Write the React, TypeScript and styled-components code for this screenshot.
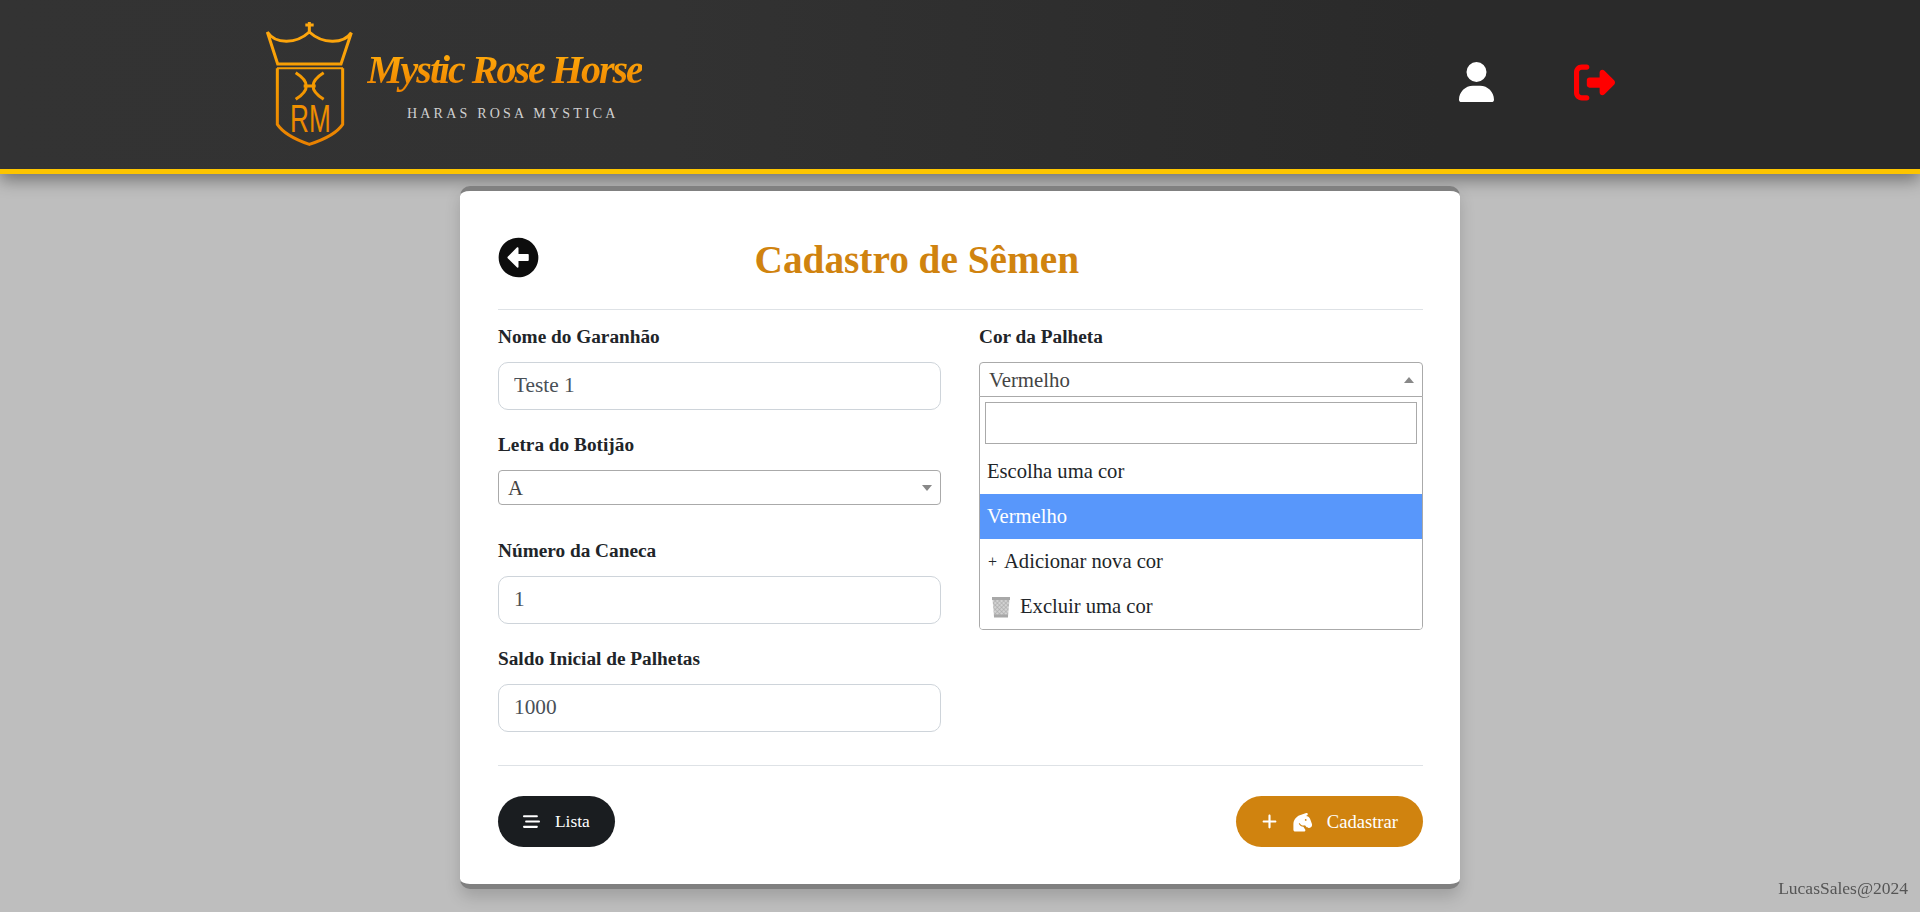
import React from 'react';
import styled, {createGlobalStyle} from 'styled-components';
import {FaUser, FaRightFromBracket, FaBarsStaggered, FaPlus, FaHorseHead} from 'react-icons/fa6';
import {FaArrowAltCircleLeft} from 'react-icons/fa';

const serif = `"Liberation Serif", "Times New Roman", serif`;

const GlobalStyle = createGlobalStyle`
  html, body {
    margin: 0;
    padding: 0;
    background: #bebebe;
  }
  body {
    font-family: ${serif};
    color: #212529;
  }
  * {
    box-sizing: border-box;
  }
`;

const Page = styled.div`
  min-height: 912px;
  background: #bebebe;
`;

const Header = styled.header`
  height: 174px;
  display: flex;
  align-items: center;
  justify-content: space-between;
  padding: 0 305px 5px 265px;
  background: linear-gradient(90deg, #333 0%, #323232 35%, #2a2a2a 75%, #2a2a2a 100%);
  border-bottom: 5px solid #fdc500;
  box-shadow: 0 6px 16px rgba(0, 0, 0, 0.4);
`;

const Brand = styled.div`
  display: flex;
  align-items: center;
  gap: 12px;
`;

const CrestMark = styled.svg`
  margin-top: 3px;
  flex: none;
`;

const BrandText = styled.div`
  display: flex;
  flex-direction: column;
  align-items: flex-start;
  margin-top: 2px;
`;

const BrandName = styled.span`
  font-size: 40px;
  line-height: 50px;
  font-style: italic;
  font-weight: 700;
  letter-spacing: -2px;
  white-space: nowrap;
  background: linear-gradient(180deg, #ffa90a 20%, #ef8500 85%);
  -webkit-background-clip: text;
  background-clip: text;
  color: transparent;
`;

const BrandTag = styled.span`
  font-size: 14px;
  line-height: 16px;
  margin: 11px 0 0 40px;
  letter-spacing: 3.2px;
  color: #d0d0d0;
  white-space: nowrap;
`;

const HeaderIcons = styled.div`
  display: flex;
  align-items: center;
  gap: 80px;
`;

const UserIcon = styled(FaUser)`
  width: 35px;
  height: 40px;
  color: #fff;
`;

const LogoutIcon = styled(FaRightFromBracket)`
  width: 41px;
  height: 41px;
  color: #ff0000;
`;

const Card = styled.main`
  width: 1000px;
  margin: 12px auto 0;
  padding: 46px 37px 37px 38px;
  background: #fff;
  border-top: 5px solid #808080;
  border-bottom: 5px solid #808080;
  border-radius: 10px;
  box-shadow: 0 8px 16px rgba(0, 0, 0, 0.16);
`;

const TitleRow = styled.div`
  display: flex;
  height: 72px;
`;

const BackIcon = styled(FaArrowAltCircleLeft)`
  width: 41px;
  height: 41px;
  margin: -0.5px -1px 0 -0.5px;
  color: #0d0d0d;
  flex: none;
`;

const Title = styled.h1`
  margin: 0 0 0 217px;
  font-size: 39.3px;
  line-height: 46px;
  font-weight: 700;
  color: #d0830f;
`;

const Divider = styled.hr`
  margin: 0;
  border: 0;
  border-top: 1px solid #dee2e6;
`;

const FormGrid = styled.div`
  display: grid;
  grid-template-columns: 443px 444px;
  column-gap: 38px;
  padding: 15px 0 33px;
`;

const Column = styled.div`
  display: flex;
  flex-direction: column;
  gap: 23px;
`;

const Field = styled.div`
  display: flex;
  flex-direction: column;
`;

const Label = styled.label`
  height: 24px;
  margin-bottom: 13px;
  font-size: 19.3px;
  line-height: 24px;
  font-weight: 700;
  color: #212529;
`;

const TextInput = styled.input`
  width: 100%;
  height: 48px;
  padding: 0 15px 2px;
  border: 1px solid #ced4da;
  border-radius: 10px;
  background: #fff;
  font-family: ${serif};
  font-size: 21.3px;
  color: #495057;
  outline: none;
`;

const SelectBox = styled.div<{$open?: boolean}>`
  position: relative;
  height: 35px;
  margin-bottom: ${({$open}) => ($open ? '0' : '11px')};
`;

const SelectHead = styled.div<{$open?: boolean}>`
  height: 100%;
  display: flex;
  align-items: center;
  justify-content: space-between;
  padding: 0 8px 0 9px;
  border: 1px solid #aaa;
  border-radius: ${({$open}) => ($open ? '4px 4px 0 0' : '4px')};
  background: #fff;
  font-size: 20.8px;
  color: #444;
`;

const Caret = styled.span<{$open?: boolean}>`
  width: 0;
  height: 0;
  border-left: 5px solid transparent;
  border-right: 5px solid transparent;
  border-top: ${({$open}) => ($open ? '0' : '6px solid #888')};
  border-bottom: ${({$open}) => ($open ? '6px solid #888' : '0')};
`;

const Dropdown = styled.div`
  position: absolute;
  top: 34px;
  left: 0;
  right: 0;
  background: #fff;
  border: 1px solid #aaa;
  border-radius: 0 0 4px 4px;
  overflow: hidden;
`;

const SearchWrap = styled.div`
  padding: 5px;
`;

const SearchInput = styled.input`
  display: block;
  width: 100%;
  height: 42px;
  border: 1px solid #aaa;
  background: #fff;
  outline: none;
`;

const Option = styled.div<{$active?: boolean}>`
  height: 45px;
  display: flex;
  align-items: center;
  gap: 6px;
  padding: 0 7px;
  font-size: 20.6px;
  background: ${({$active}) => ($active ? '#5897fb' : '#fff')};
  color: ${({$active}) => ($active ? '#fff' : '#212529')};
`;

const OptionPlus = styled.span`
  width: 10px;
  margin-left: 1px;
  font-size: 16px;
`;

const TrashIcon = styled.svg`
  width: 20px;
  height: 22px;
  margin: 0 3px 0 4px;
  flex: none;
`;

const Actions = styled.div`
  display: flex;
  justify-content: space-between;
  padding-top: 30px;
`;

const PillButton = styled.button<{$primary?: boolean}>`
  height: 51px;
  display: inline-flex;
  align-items: center;
  padding: ${({$primary}) => ($primary ? '0 25px 0 26px' : '0 25px 0 24px')};
  border: 0;
  border-radius: 26px;
  background: ${({$primary}) => ($primary ? '#d0830f' : '#1a1d20')};
  color: #fff;
  font-family: ${serif};
  font-size: ${({$primary}) => ($primary ? '18.6px' : '17.4px')};
  font-weight: 400;
`;

const ListIcon = styled(FaBarsStaggered)`
  width: 19px;
  height: 17px;
  margin-right: 14px;
`;

const PlusIcon = styled(FaPlus)`
  width: 15px;
  height: 17px;
  margin-right: 14px;
`;

const HorseIcon = styled(FaHorseHead)`
  width: 24px;
  height: 24px;
  margin-right: 12px;
`;

const Credit = styled.footer`
  position: fixed;
  right: 12px;
  bottom: 15px;
  font-size: 17.5px;
  line-height: 18px;
  color: #555;
`;

const goldStroke = 'url(#crestGold)';

const Crest = () => (
  <CrestMark width="90" height="128" viewBox="30 32 270 384" fill="none" aria-hidden="true">
    <defs>
      <linearGradient id="crestGold" gradientUnits="userSpaceOnUse" x1="0" y1="32" x2="0" y2="416">
        <stop offset="0" stopColor="#ffa910" />
        <stop offset="0.5" stopColor="#f59a00" />
        <stop offset="1" stopColor="#e87f00" />
      </linearGradient>
    </defs>
    <g stroke={goldStroke} strokeWidth="9" strokeLinejoin="miter">
      <path d="M37 68 C62 106 124 104 163 68 C202 104 264 106 289 70 L258 164 L68 164 Z" />
      <path d="M163 68 V38 M151 47 H176" />
      <path d="M66 177 H264" strokeWidth="6" />
      <path d="M67 177 V345 Q90 380 163 405 Q240 380 263 345 V177" />
      <path d="M122 190 Q186 230 122 270 M206 190 Q142 230 206 270 M146 230 H182" />
    </g>
    <text
      x="105"
      y="368"
      fontFamily='"Liberation Sans", Arial, sans-serif'
      fontSize="118"
      textLength="122"
      lengthAdjust="spacingAndGlyphs"
      fill={goldStroke}
    >
      RM
    </text>
  </CrestMark>
);

const WireBasket = () => (
  <TrashIcon viewBox="0 0 20 22" aria-hidden="true">
    <defs>
      <pattern id="wireMesh" width="3" height="3" patternUnits="userSpaceOnUse" patternTransform="rotate(45)">
        <rect width="3" height="3" fill="#d2d2d2" />
        <path d="M0 0H3M0 0V3" stroke="#a3a3a3" strokeWidth="1" />
      </pattern>
    </defs>
    <path d="M1.5 3 H18.5 L17 21 H3 Z" fill="url(#wireMesh)" />
    <rect x="1" y="1" width="18" height="3" fill="#a8a8a8" />
    <rect x="3" y="18.5" width="14" height="3" fill="#a8a8a8" />
  </TrashIcon>
);

export default function App() {
  return (
    <Page>
      <GlobalStyle />
      <Header>
        <Brand>
          <Crest />
          <BrandText>
            <BrandName>Mystic Rose Horse</BrandName>
            <BrandTag>HARAS ROSA MYSTICA</BrandTag>
          </BrandText>
        </Brand>
        <HeaderIcons>
          <UserIcon />
          <LogoutIcon />
        </HeaderIcons>
      </Header>

      <Card>
        <TitleRow>
          <BackIcon />
          <Title>Cadastro de Sêmen</Title>
        </TitleRow>
        <Divider />

        <FormGrid>
          <Column>
            <Field>
              <Label>Nome do Garanhão</Label>
              <TextInput readOnly value="Teste 1" />
            </Field>
            <Field>
              <Label>Letra do Botijão</Label>
              <SelectBox>
                <SelectHead>
                  A
                  <Caret />
                </SelectHead>
              </SelectBox>
            </Field>
            <Field>
              <Label>Número da Caneca</Label>
              <TextInput readOnly value="1" />
            </Field>
            <Field>
              <Label>Saldo Inicial de Palhetas</Label>
              <TextInput readOnly value="1000" />
            </Field>
          </Column>

          <Column>
            <Field>
              <Label>Cor da Palheta</Label>
              <SelectBox $open>
                <SelectHead $open>
                  Vermelho
                  <Caret $open />
                </SelectHead>
                <Dropdown>
                  <SearchWrap>
                    <SearchInput readOnly />
                  </SearchWrap>
                  <Option>Escolha uma cor</Option>
                  <Option $active>Vermelho</Option>
                  <Option>
                    <OptionPlus>+</OptionPlus>
                    Adicionar nova cor
                  </Option>
                  <Option>
                    <WireBasket />
                    Excluir uma cor
                  </Option>
                </Dropdown>
              </SelectBox>
            </Field>
          </Column>
        </FormGrid>

        <Divider />

        <Actions>
          <PillButton>
            <ListIcon />
            Lista
          </PillButton>
          <PillButton $primary>
            <PlusIcon />
            <HorseIcon />
            Cadastrar
          </PillButton>
        </Actions>
      </Card>

      <Credit>LucasSales@2024</Credit>
    </Page>
  );
}
